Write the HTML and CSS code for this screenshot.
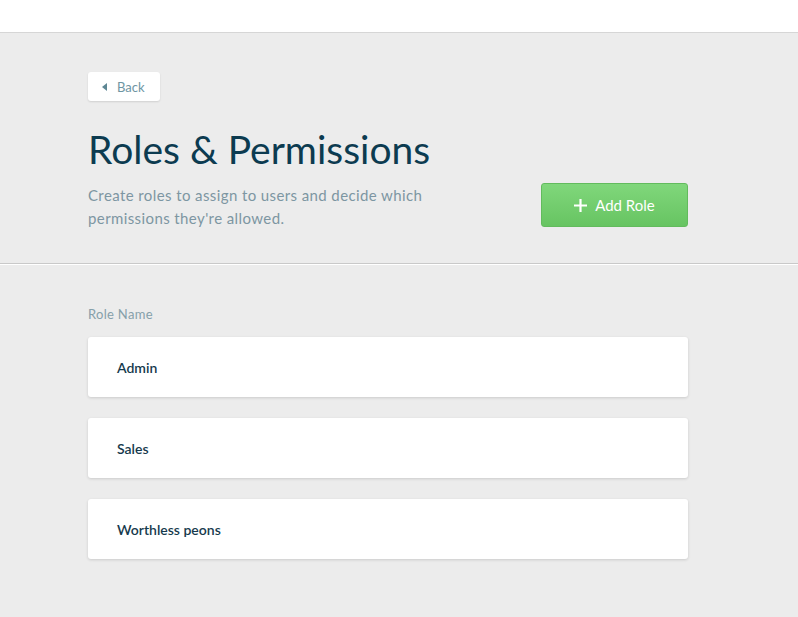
FILE: index.html
```html
<!DOCTYPE html>
<html lang="en">
<head>
  <meta charset="UTF-8">
  <title>Roles &amp; Permissions</title>
  <link rel="stylesheet" href="styles.css">
</head>
<body>
<div class="topbar"></div>

<div class="head">
  <div class="wrap">
    <a class="back" href="#">
      <svg width="5" height="8" viewBox="0 0 5 8"><path d="M5 0 L5 8 L0 4 Z" fill="#5e8794"/></svg>
      Back
    </a>
    <h1 class="title">Roles &amp; Permissions</h1>
    <div class="head-row">
      <p class="desc">Create roles to assign to users and decide which permissions they're allowed.</p>
      <button class="add-btn">
        <svg width="13" height="13" viewBox="0 0 13 13"><path d="M6.5 0 V13 M0 6.5 H13" stroke="#fff" stroke-width="2.2"/></svg>
        Add Role
      </button>
    </div>
  </div>
</div>

<div class="list">
  <div class="wrap">
    <div class="label">Role Name</div>
    <div class="card">Admin</div>
    <div class="card">Sales</div>
    <div class="card">Worthless peons</div>
  </div>
</div>
</body>
</html>
```

FILE: styles.css
```css
* {
  margin: 0;
  padding: 0;
  box-sizing: border-box;
}
body {
  background-color: #ececec;
  font-family: Lato, "Open Sans", sans-serif;
}
.topbar {
  height: 33px;
  background: #fff;
  border-bottom: 1px solid #d6d6d6;
}
.wrap {
  width: 600px;
  margin-left: 88px;
}

.head {
  padding-top: 39px;
  height: 231px;
  border-bottom: 1px solid #c9c9c9;
  box-shadow: 0 1px 0 #fff;
}
.back {
  display: inline-flex;
  align-items: center;
  gap: 10px;
  height: 29px;
  padding: 0 15px 0 14px;
  background: #fff;
  border-radius: 3px;
  box-shadow: 0 1px 2px rgba(0, 0, 0, 0.12);
  color: #6e95a3;
  font-size: 13px;
  text-decoration: none;
}
.title {
  margin-top: 21px;
  font-size: 39px;
  font-weight: 400;
  line-height: 54px;
  color: #0c3b50;
}
.head-row {
  display: flex;
  justify-content: space-between;
  align-items: flex-start;
  margin-top: 6px;
}
.desc {
  width: 360px;
  padding-top: 2px;
  font-size: 15px;
  line-height: 23px;
  letter-spacing: 0.4px;
  color: #7d96a2;
}
.add-btn {
  display: flex;
  align-items: center;
  justify-content: center;
  gap: 8px;
  width: 147px;
  height: 44px;
  margin-top: 1px;
  border: 1px solid #62bb5d;
  border-radius: 3px;
  background: linear-gradient(#80d77b, #67c462);
  color: #fff;
  font-family: inherit;
  font-size: 15px;
}

.list {
  padding-top: 42px;
}
.label {
  font-size: 13px;
  letter-spacing: 0.3px;
  color: #86a0aa;
  margin-bottom: 15px;
}
.card {
  height: 60px;
  display: flex;
  align-items: center;
  padding-left: 29px;
  margin-bottom: 21px;
  background: #fff;
  border-radius: 3px;
  box-shadow: 0 1px 3px rgba(0, 0, 0, 0.14);
  color: #163a4d;
  font-size: 14px;
  font-weight: 600;
}
```
